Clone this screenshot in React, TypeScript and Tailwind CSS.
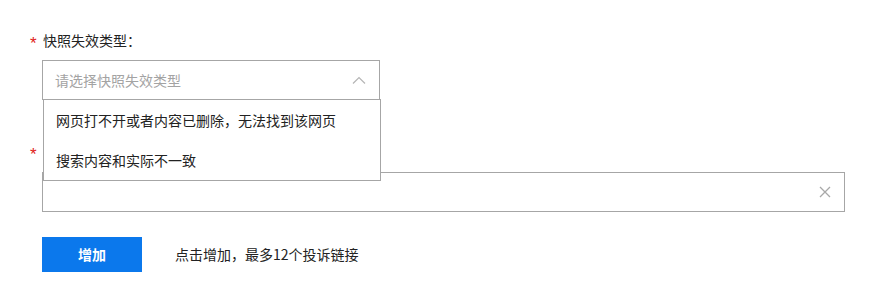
import { useState } from 'react'

const options = ['网页打不开或者内容已删除，无法找到该网页', '搜索内容和实际不一致']

export default function App() {
    const [open] = useState(true)
    const [value] = useState('')

    return (
        <div
            className="w-[875px] h-[285px] bg-white text-[14px] text-[#333] pt-[30px] pl-[30px]"
            style={{ fontFamily: '"Noto Sans CJK SC", "Noto Sans", sans-serif' }}
        >
            {/* 快照失效类型 */}
            <div className="flex items-center h-[20px] leading-[20px]">
                <span className="w-[13px] text-[#e02020] text-[17px] relative top-[4px] font-['Liberation_Sans']">*</span>
                <span className="text-[#222]">快照失效类型：</span>
            </div>
            <div className="relative ml-[12px] mt-[10px] w-[338px]">
                <div className="h-[40px] border border-[#a6a6a6] flex items-center justify-between pl-[12px] pr-[13px]">
                    <span className="text-[#a3a3a3]">{value || '请选择快照失效类型'}</span>
                    <svg width="14" height="8" viewBox="0 0 14 8" fill="none">
                        <path d="M1 7.5 L7 1.5 L13 7.5" stroke="#b5b5b5" strokeWidth="1.2" />
                    </svg>
                </div>
                {open && (
                    <ul className="absolute z-10 left-[1px] top-[39px] w-[338px] bg-white border border-[#a6a6a6]">
                        {options.map((o) => (
                            <li key={o} className="h-[40px] leading-[40px] pl-[12px] text-[#222]">
                                {o}
                            </li>
                        ))}
                    </ul>
                )}
            </div>

            {/* 投诉链接（标签被下拉层遮住） */}
            <div className="flex items-center h-[20px] leading-[20px] mt-[41px]">
                <span className="w-[13px] text-[#e02020] text-[17px] relative top-[4px] font-['Liberation_Sans']">*</span>
            </div>
            <div className="ml-[12px] mt-[11px] w-[803px] h-[40px] border border-[#a6a6a6] flex items-center justify-end pr-[13px]">
                <svg width="12" height="12" viewBox="0 0 12 12" fill="none">
                    <path d="M1 1 L11 11 M11 1 L1 11" stroke="#a8a8a8" strokeWidth="1.3" />
                </svg>
            </div>

            {/* 操作 */}
            <div className="flex items-center ml-[12px] mt-[25px]">
                <button className="w-[100px] h-[35px] bg-[#0b78ec] text-white font-bold text-[14px]">增加</button>
                <span className="ml-[33px] text-[#222]">点击增加，最多12个投诉链接</span>
            </div>
        </div>
    )
}
